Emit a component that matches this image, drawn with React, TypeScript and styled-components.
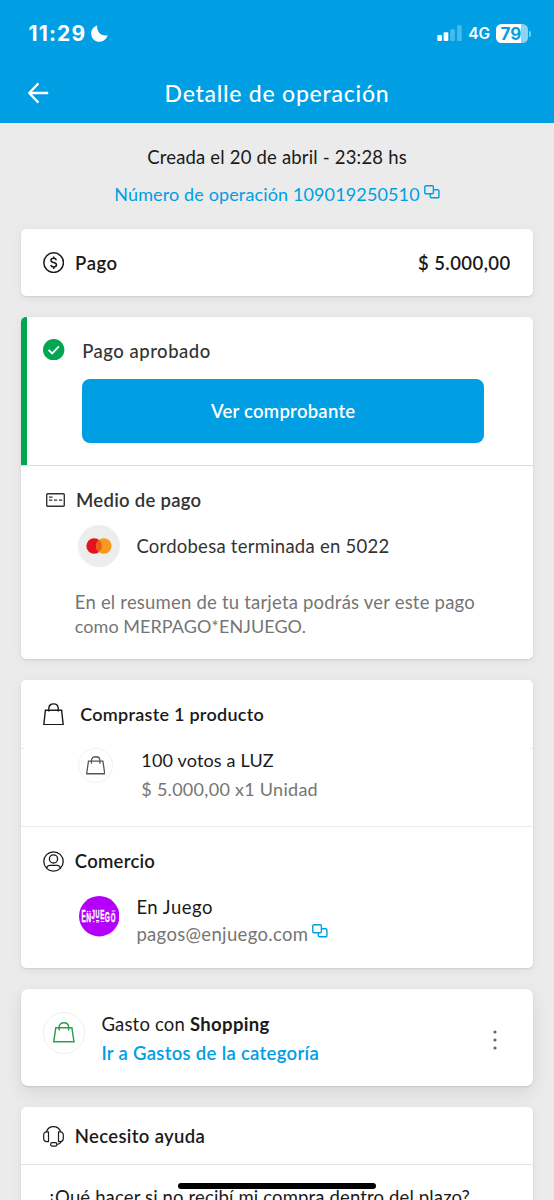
import React from 'react';
import styled, { createGlobalStyle } from 'styled-components';

const BLUE = '#009ee3';
const INK = '#1a1a1a';
const GREY = '#757575';

const GlobalStyle = createGlobalStyle`
  * { box-sizing: border-box; }
  body { margin: 0; background: #ebebeb; }
`;

const Screen = styled.div`
  position: relative;
  width: 554px;
  height: 1200px;
  overflow: hidden;
  background: #ebebeb;
  font-family: Lato, sans-serif;
  font-size: 18.5px;
  line-height: 24px;
  color: ${INK};

  svg { display: block; flex: none; }
`;

const Header = styled.header`
  height: 123px;
  background: ${BLUE};
  color: #fff;
`;

const StatusBar = styled.div`
  display: flex;
  align-items: center;
  height: 67px;
  padding: 0 23px 0 28.5px;
  font-family: Inter, sans-serif;
`;

const Clock = styled.span`
  font-size: 21px;
  font-weight: 700;
  letter-spacing: 1.15px;
  margin-right: 5px;
`;

const StatusRight = styled.div`
  display: flex;
  align-items: center;
  margin-left: auto;
`;

const Network = styled.span`
  margin: 1px 6px 0 5px;
  font-size: 15.5px;
  font-weight: 600;
  letter-spacing: -0.1px;
`;

const Battery = styled.div`
  display: flex;
  align-items: center;
  gap: 1px;
`;

const BatteryBody = styled.div`
  width: 32px;
  height: 19px;
  border-radius: 5.5px;
  background: linear-gradient(to right, #fff 25px, rgba(255, 255, 255, 0.55) 25px);
  color: ${BLUE};
  font-size: 17px;
  font-weight: 700;
  line-height: 20px;
  padding-left: 4.5px;
`;

const BatteryNub = styled.div`
  width: 2px;
  height: 6px;
  border-radius: 0 2px 2px 0;
  background: rgba(255, 255, 255, 0.5);
`;

const NavBar = styled.div`
  display: grid;
  grid-template-columns: 60px 1fr 60px;
  align-items: center;
  height: 51px;
`;

const BackButton = styled.span`
  padding-left: 27px;
`;

const Title = styled.h1`
  margin: 0;
  text-align: center;
  font-size: 23px;
  font-weight: 500;
  line-height: 28px;
  letter-spacing: 0.76px;
`;

const Summary = styled.section`
  display: flex;
  flex-direction: column;
  align-items: center;
  gap: 13px;
  height: 106px;
  padding-top: 22px;
`;

const Text = styled.span<{ $track?: number; $weight?: number; $color?: string; $size?: number }>`
  display: block;
  white-space: nowrap;
  font-size: ${p => p.$size ?? 18.5}px;
  font-weight: ${p => p.$weight ?? 400};
  color: ${p => p.$color ?? INK};
  letter-spacing: ${p => p.$track ?? 0.2}px;
`;

const Copyable = styled.div`
  display: flex;
  align-items: flex-start;
  gap: 4px;
`;

const Cards = styled.main`
  display: flex;
  flex-direction: column;
  gap: 21.33px;
  margin: 0 21.3px;
`;

const Card = styled.section<{ $height: number; $raised?: boolean }>`
  flex: none;
  height: ${p => p.$height}px;
  border-radius: ${p => (p.$raised ? 7 : 5)}px;
  background: #fff;
  overflow: hidden;
  box-shadow: ${p =>
    p.$raised
      ? '0 1px 2px rgba(0,0,0,.12), 0 6px 18px rgba(0,0,0,.09)'
      : '0 1px 2px rgba(0,0,0,.1), 0 2px 12px rgba(0,0,0,.05)'};
`;

const Section = styled.div<{ $height?: number; $line?: string }>`
  height: ${p => (p.$height ? `${p.$height}px` : 'auto')};
  border-bottom: ${p => (p.$line ? `1px solid ${p.$line}` : '0')};
`;

const ApprovedSection = styled(Section)`
  border-left: 6px solid #00a650;
  padding: 22px 48px 0 16px;
  display: flex;
  align-items: flex-start;
  gap: 17.5px;
`;

/* The status section's rule also runs below its coloured edge. */
const Rule = styled.div`
  height: 1px;
  background: #dcdcdc;
`;

const ApprovedBody = styled.div`
  flex: 1;
`;

const PrimaryButton = styled.button`
  display: block;
  width: 402px;
  height: 64px;
  margin-top: 16px;
  padding: 0;
  border: 0;
  border-radius: 8px;
  background: ${BLUE};
  font: 600 18.5px/24px Lato, sans-serif;
  letter-spacing: 0.25px;
  color: #fff;
`;

const Row = styled.div<{ $top?: number; $left?: number; $gap: number; $align?: string }>`
  display: flex;
  align-items: ${p => p.$align ?? 'center'};
  gap: ${p => p.$gap}px;
  padding: ${p => p.$top ?? 0}px 22px 0 ${p => p.$left ?? 21.7}px;
`;

const PaymentRow = styled(Row)`
  height: 100%;
  padding-top: 1px;
`;

const Amount = styled(Text)`
  margin-left: auto;
`;

const Lines = styled.div<{ $gap?: number }>`
  display: flex;
  flex-direction: column;
  gap: ${p => p.$gap ?? 0}px;
`;

const Note = styled.div`
  padding: 23px 0 0 53.5px;
`;

const Disc = styled.div<{ $size: number; $bg?: string; $ring?: string }>`
  flex: none;
  display: flex;
  align-items: center;
  justify-content: center;
  width: ${p => p.$size}px;
  height: ${p => p.$size}px;
  border-radius: 50%;
  background: ${p => p.$bg ?? '#fff'};
  border: ${p => (p.$ring ? `1.5px solid ${p.$ring}` : '0')};
`;

const ProductSection = styled(Section)`
  background:
    linear-gradient(#ececec, #ececec) left top / 3px 1px no-repeat,
    linear-gradient(#ececec, #ececec) right top / 3px 1px no-repeat;
`;

const InlineText = styled.span<{ $weight: number; $track: number }>`
  font-weight: ${p => p.$weight};
  letter-spacing: ${p => p.$track}px;
`;

const MoreButton = styled.span`
  margin-left: auto;
  padding: 18px 13.5px 0 0;
`;

const HomeIndicator = styled.div`
  position: absolute;
  left: 178px;
  top: 1182.5px;
  width: 198px;
  height: 6.5px;
  border-radius: 4px;
  background: #000;
`;

const MoonIcon = () => (
  <svg width="17" height="17" viewBox="0 0 17 17">
    <path d="M6.2 0.4C5.4 5.9 9.7 11.6 16.7 10.3 15.3 14.3 12.3 16.7 8.6 16.7 3.9 16.7 0.2 13 0.2 8.4 0.2 4.8 2.5 1.6 6.2 0.4Z" fill="#fff" />
  </svg>
);

const SignalIcon = () => (
  <svg width="26" height="17" viewBox="0 0 26 17" fill="#fff">
    <rect x="0.3" y="10" width="4.7" height="6" rx="1" />
    <rect x="6.6" y="7.3" width="4.7" height="8.7" rx="1" />
    <rect x="13.2" y="4.2" width="4.7" height="11.8" rx="1" opacity=".28" />
    <rect x="20.1" y="0.3" width="4.7" height="15.7" rx="1" opacity=".28" />
  </svg>
);

const ArrowIcon = () => (
  <svg width="22" height="22" viewBox="0 0 22 22" fill="none" stroke="#fff" strokeWidth="2.3">
    <path d="M11.4 1.4 2.2 11l9.2 9.6M2.4 11h18.8" strokeLinejoin="round" />
  </svg>
);

const CopyIcon = () => (
  <svg width="16" height="14" viewBox="0 0 16 14" fill="none" stroke={BLUE} strokeWidth="1.4">
    <rect x="0.8" y="0.8" width="8.6" height="8" rx="1.1" />
    <path d="M9.4 4.8h4.4a1.1 1.1 0 0 1 1.1 1.1v5.8a1.1 1.1 0 0 1-1.1 1.1H7.4a1.1 1.1 0 0 1-1.1-1.1V8.8" />
  </svg>
);

const MoneyIcon = () => (
  <svg width="21.3" height="21.3" viewBox="0 0 21.3 21.3" fill="none" stroke={INK} strokeWidth="1.5">
    <circle cx="10.65" cy="10.65" r="9.8" />
    <path d="M13.3 8.2c-.3-1.2-1.3-1.9-2.6-1.9-1.5 0-2.7.8-2.7 2.1 0 1.3 1 1.8 2.7 2.2 1.7.4 2.8.9 2.8 2.2s-1.2 2.2-2.8 2.2c-1.5 0-2.5-.7-2.9-2M10.7 4.5v1.9M10.7 15v1.9" />
  </svg>
);

const CheckIcon = () => (
  <svg width="21.4" height="21.4" viewBox="0 0 21.4 21.4">
    <circle cx="10.7" cy="10.7" r="10.7" fill="#00a650" />
    <path d="M5.6 11 9.2 14.4 15.9 7.5" fill="none" stroke="#fff" strokeWidth="1.8" />
  </svg>
);

const CardIcon = () => (
  <svg width="19" height="14" viewBox="0 0 19 14" fill="none" stroke="#333" strokeWidth="1.4">
    <rect x="0.7" y="0.7" width="17.6" height="12.6" rx="1" />
    <path d="M3 4.1h3.5M3 7.2h3.3M8 7.2h3.2M13 7.2h3.2" strokeWidth="1.3" />
  </svg>
);

const BagIcon = () => (
  <svg width="21" height="22.4" viewBox="0 0 21 22.4" fill="none" stroke={INK} strokeWidth="1.4">
    <path d="M2.4 7.2h16.2l1.6 14.4H0.8Z" />
    <path d="M5.8 8.6V5.6C5.8 2.8 7.8 0.9 10.5 0.9s4.7 1.9 4.7 4.7v3" />
  </svg>
);

/* Squatter bag, used inside round frames. */
const RoundBagIcon = ({ size, color }: { size: number; color: string }) => (
  <svg width={size} height={(size * 20) / 21} viewBox="0 0 21 20" fill="none" stroke={color} strokeWidth="1.4">
    <path d="M2.7 5.5h15.6l2 13.7H0.7Z" />
    <path d="M5.9 8.3V4.9C5.9 2.4 7.9 0.8 10.5 0.8s4.6 1.6 4.6 4.1v3.4" />
  </svg>
);

const UserIcon = () => (
  <svg width="21" height="21" viewBox="0 0 21 21" fill="none" stroke={INK} strokeWidth="1.3">
    <circle cx="10.5" cy="10.5" r="9.7" />
    <circle cx="10.5" cy="7.9" r="4.1" />
    <path d="M3.6 17.3c.3-1.9 1.5-3 3.4-3h7c1.9 0 3.1 1.1 3.4 3" />
  </svg>
);

const HeadsetIcon = () => (
  <svg width="21" height="21" viewBox="0 0 21 21" fill="none" stroke={INK} strokeWidth="1.2">
    <path d="M3.3 5.8C4.6 2.5 7.2.7 10.5.7s5.9 1.8 7.2 5.1M18 15.6c-.5 1.7-1.9 2.6-4 2.7" />
    <path d="M5.5 5.8v9.8H3.7A3 3 0 0 1 .7 12.6V8.8a3 3 0 0 1 3-3ZM15.5 5.8v9.8h1.8a3 3 0 0 0 3-3V8.8a3 3 0 0 0-3-3Z" strokeLinejoin="round" />
    <rect x="7.6" y="16.7" width="6.3" height="3.5" rx="1.75" />
  </svg>
);

const MastercardLogo = () => (
  <svg width="26" height="16" viewBox="0 0 26 16">
    <circle cx="8.2" cy="8" r="7.8" fill="#e3131b" />
    <circle cx="17.8" cy="8" r="7.8" fill="#f59a1c" />
    <path d="M13 1.85a7.8 7.8 0 0 1 0 12.3 7.8 7.8 0 0 1 0-12.3Z" fill="#ee5b1c" />
  </svg>
);

const LogoLetter = styled.text`
  font-family: 'Liberation Sans', sans-serif;
  font-weight: 700;
  fill: #fff;
  stroke: #fff;
  stroke-width: 0.4px;
`;

/* Merchant wordmark: letters of uneven height with small marks filling the gaps. */
const LETTERS = [
  { c: 'E', x: 2.4, y: 26, w: 0.4, s: 16 },
  { c: 'N', x: 7.2, y: 26.2, w: 0.55, s: 12 },
  { c: 'J', x: 12.6, y: 23.2, w: 0.5, s: 12 },
  { c: 'U', x: 16.6, y: 22.4, w: 0.5, s: 11 },
  { c: 'E', x: 21.3, y: 23, w: 0.5, s: 12.5 },
  { c: 'G', x: 25.8, y: 26, w: 0.42, s: 15.5 },
  { c: 'O', x: 31.8, y: 26, w: 0.48, s: 12.5 },
];

const EnJuegoLogo = () => (
  <svg width="40.4" height="40.4" viewBox="0 0 40.4 40.4">
    <circle cx="20.2" cy="20.2" r="20.2" fill="#b400fa" />
    {LETTERS.map((l, i) => (
      <LogoLetter key={i} fontSize={l.s} transform={`translate(${l.x} ${l.y}) scale(${l.w} 1)`}>
        {l.c}
      </LogoLetter>
    ))}
    <path d="M8 15.5h1.3M10.3 15.5h1.3M14 25.6h1.5M17 24.5h3.3M17 26h3.3M21.8 25.5h3.6M32.8 15h3.6" stroke="#fff" strokeWidth="1" fill="none" />
  </svg>
);

const DotsIcon = () => (
  <svg width="4" height="20" viewBox="0 0 4 20" fill="#666">
    <circle cx="2" cy="2" r="1.6" />
    <circle cx="2" cy="10" r="1.6" />
    <circle cx="2" cy="18" r="1.6" />
  </svg>
);

const CopyButton = styled.span`
  padding-top: 2.5px;
`;

const LogoFrame = styled.div`
  padding-top: 1.5px;
`;

export default function App() {
  return (
    <>
      <GlobalStyle />
      <Screen>
        <Header>
          <StatusBar>
            <Clock>11:29</Clock>
            <MoonIcon />
            <StatusRight>
              <SignalIcon />
              <Network>4G</Network>
              <Battery>
                <BatteryBody>79</BatteryBody>
                <BatteryNub />
              </Battery>
            </StatusRight>
          </StatusBar>
          <NavBar>
            <BackButton><ArrowIcon /></BackButton>
            <Title>Detalle de operación</Title>
          </NavBar>
        </Header>

        <Summary>
          <Text $track={0.18}>Creada el 20 de abril - 23:28 hs</Text>
          <Copyable>
            <Text $size={18} $track={0.13} $color={BLUE}>Número de operación 109019250510</Text>
            <CopyButton><CopyIcon /></CopyButton>
          </Copyable>
        </Summary>

        <Cards>
          <Card $height={66.67}>
            <PaymentRow $gap={10.8}>
              <MoneyIcon />
              <Text $weight={600} $track={0.55}>Pago</Text>
              <Amount $weight={600} $track={0.44}>$ 5.000,00</Amount>
            </PaymentRow>
          </Card>

          <Card $height={341.67}>
            <ApprovedSection $height={147.6}>
              <CheckIcon />
              <ApprovedBody>
                <Text $weight={500} $track={0.5} $color="#333">Pago aprobado</Text>
                <PrimaryButton>Ver comprobante</PrimaryButton>
              </ApprovedBody>
            </ApprovedSection>
            <Rule />
            <Row $top={22.3} $left={24.7} $gap={11}>
              <CardIcon />
              <Text $weight={600} $track={0.28} $color="#333">Medio de pago</Text>
            </Row>
            <Row $top={13.2} $left={56.7} $gap={16}>
              <Disc $size={42.4} $bg="#ededed"><MastercardLogo /></Disc>
              <Text $track={0.25} $color="#333">Cordobesa terminada en 5022</Text>
            </Row>
            <Note>
              <Text $track={0.2} $color={GREY}>En el resumen de tu tarjeta podrás ver este pago</Text>
              <Text $size={18} $track={0.05} $color={GREY}>como MERPAGO*ENJUEGO.</Text>
            </Note>
          </Card>

          <Card $height={288.2}>
            <Section $height={67.7}>
              <Row $top={22} $gap={16.3}>
                <BagIcon />
                <Text $size={18} $weight={600} $track={0.26}>Compraste 1 producto</Text>
              </Row>
            </Section>
            <ProductSection $height={79.6} $line="#ececec">
              <Row $left={56.7} $gap={28} $align="flex-start">
                <Disc $size={35.3} $ring="#f0f0f0"><RoundBagIcon size={19.4} color="#555" /></Disc>
                <Lines $gap={5.5}>
                  <Text $size={18} $track={0.17}>100 votos a LUZ</Text>
                  <Text $size={18} $track={0.28} $color={GREY}>$ 5.000,00 x1 Unidad</Text>
                </Lines>
              </Row>
            </ProductSection>
            <Row $top={22} $gap={10.8}>
              <UserIcon />
              <Text $weight={600} $track={0.25}>Comercio</Text>
            </Row>
            <Row $top={21.5} $left={57.4} $gap={17.3} $align="flex-start">
              <LogoFrame><EnJuegoLogo /></LogoFrame>
              <Lines $gap={3}>
                <Text $track={0.5}>En Juego</Text>
                <Copyable>
                  <Text $track={0.33} $color={GREY}>pagos@enjuego.com</Text>
                  <CopyButton><CopyIcon /></CopyButton>
                </Copyable>
              </Lines>
            </Row>
          </Card>

          <Card $height={96.4} $raised>
            <Row $top={22.5} $gap={16.8} $align="flex-start">
              <Disc $size={41.6} $ring="#e6f4ea"><RoundBagIcon size={21.7} color="#2e9e48" /></Disc>
              <Lines $gap={5.2}>
                <Text as="div">
                  <InlineText $weight={400} $track={0.19}>Gasto con </InlineText>
                  <InlineText $weight={700} $track={0.34}>Shopping</InlineText>
                </Text>
                <Text $weight={600} $track={0.3} $color={BLUE}>Ir a Gastos de la categoría</Text>
              </Lines>
              <MoreButton><DotsIcon /></MoreButton>
            </Row>
          </Card>

          <Card $height={140}>
            <Section $height={57.5} $line="#e4e4e4">
              <Row $top={17} $gap={10.8}>
                <HeadsetIcon />
                <Text $weight={600} $track={0.34}>Necesito ayuda</Text>
              </Row>
            </Section>
            <Row $top={20.5} $left={26} $gap={0}>
              <Text $track={0.14}>¿Qué hacer si no recibí mi compra dentro del plazo?</Text>
            </Row>
          </Card>
        </Cards>

        <HomeIndicator />
      </Screen>
    </>
  );
}
